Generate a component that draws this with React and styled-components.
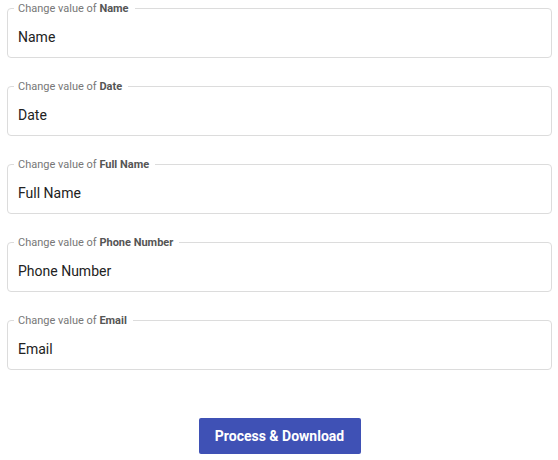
import React, { useState } from "react";
import styled, { createGlobalStyle } from "styled-components";

const GlobalStyle = createGlobalStyle`
  body {
    margin: 0;
    background: #fff;
    font-family: Roboto, "Liberation Sans", sans-serif;
  }
`;

const Page = styled.div`
  padding: 0 6px 0 7px;
  display: flex;
  flex-direction: column;
`;

const FieldList = styled.div`
  display: flex;
  flex-direction: column;
  gap: 20px;
`;

const Field = styled.fieldset`
  margin: 0;
  padding: 0 10px;
  border: 1px solid #dcdcdc;
  border-radius: 4px;
  min-width: 0;
`;

const Label = styled.legend`
  margin-left: -4px;
  padding: 2px 6px 0 4px;
  font-size: 11px;
  line-height: 14px;
  color: #777;

  b {
    font-weight: 700;
    color: #555;
  }
`;

const Input = styled.input`
  display: block;
  width: 100%;
  box-sizing: border-box;
  height: 41px;
  padding: 0;
  border: none;
  outline: none;
  background: transparent;
  font-family: Roboto, "Liberation Sans", sans-serif;
  font-size: 14px;
  color: #222;
`;

const Actions = styled.div`
  display: flex;
  justify-content: center;
  margin-top: 48px;
`;

const Button = styled.button`
  width: 162px;
  height: 36px;
  border: none;
  border-radius: 2px;
  background: #3f51b5;
  color: #fff;
  font-family: Roboto, "Liberation Sans", sans-serif;
  font-size: 14px;
  font-weight: 700;
  cursor: pointer;
`;

const fields = ["Name", "Date", "Full Name", "Phone Number", "Email"];

export default function App() {
  const [values, setValues] = useState(
    Object.fromEntries(fields.map((f) => [f, f]))
  );

  return (
    <>
      <GlobalStyle />
      <Page>
        <FieldList>
          {fields.map((f) => (
            <Field key={f}>
              <Label>
                Change value of <b>{f}</b>
              </Label>
              <Input
                value={values[f]}
                onChange={(e) => setValues({ ...values, [f]: e.target.value })}
              />
            </Field>
          ))}
        </FieldList>
        <Actions>
          <Button>Process &amp; Download</Button>
        </Actions>
      </Page>
    </>
  );
}
